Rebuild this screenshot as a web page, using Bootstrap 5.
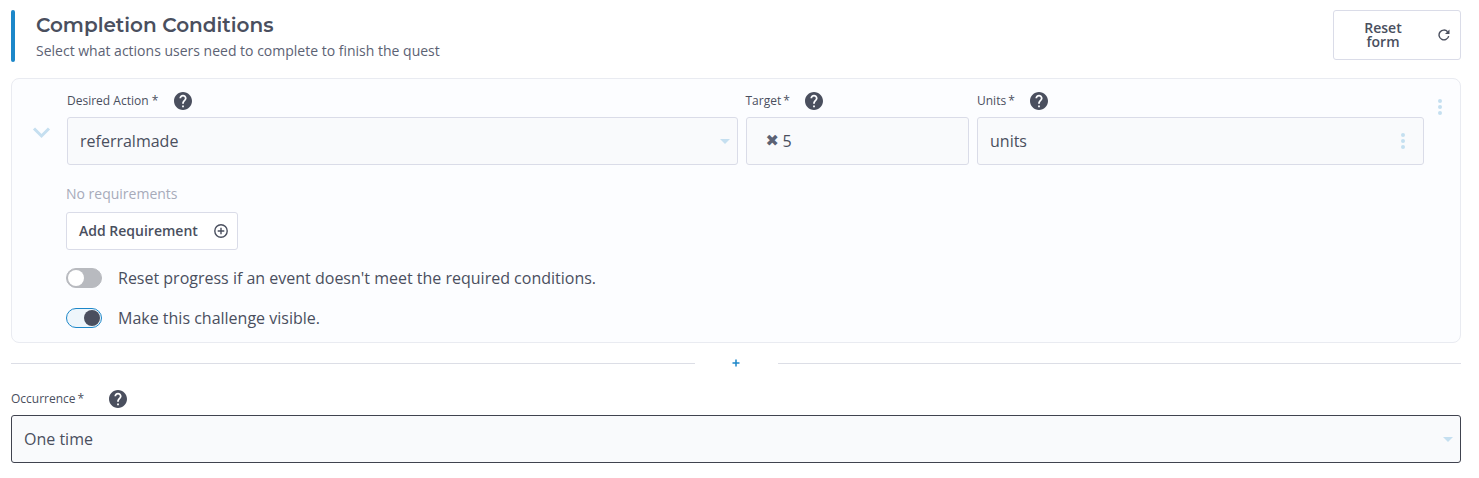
<!DOCTYPE html>
<html lang="en">
<head>
<meta charset="utf-8">
<meta name="viewport" content="width=device-width, initial-scale=1">
<title>Completion Conditions</title>
<link href="https://cdn.jsdelivr.net/npm/bootstrap@5.3.0/dist/css/bootstrap.min.css" rel="stylesheet">
<style>
  :root { --ink: #4a4f5e; --line: #dadce8; --pale: #c5dff0; --accent: #1c87c9; }
  body { font-family: "Open Sans", "Noto Sans", sans-serif; color: var(--ink); font-size: 16px; line-height: 24px; background: #fff; }
  .page-form { padding: 10px 18px 15px 11px; }
  .accent-bar { width: 4px; height: 52px; border-radius: 2px; background: var(--accent); margin-right: 21px; }
  .section-title { font-family: Montserrat, "Open Sans", sans-serif; font-size: 20px; line-height: 30px; font-weight: 600; margin: 0; }
  .section-note { font-size: 14px; line-height: 22px; color: #5c6274; margin: 0; }
  .btn-plain { --bs-btn-color: var(--ink); --bs-btn-bg: #fff; --bs-btn-border-color: var(--line); --bs-btn-hover-color: var(--ink); --bs-btn-hover-bg: #f8fafc; --bs-btn-hover-border-color: var(--line); --bs-btn-border-radius: 3px; font-size: 14px; line-height: 14px; font-weight: 600; }
  .btn-reset { width: 128px; height: 50px; padding: 0 10px; }
  .btn-add { height: 38px; padding: 0 8px 0 12px; gap: 15px; }
  .challenge { border: 1px solid #e9ebf1; border-radius: 8px; background: #fcfdff; margin-top: 16px; padding: 12px 10px 14px 20px; }
  .icon-button { border: 0; padding: 0; background: none; color: var(--pale); line-height: 0; }
  .toggle-col { width: 20px; margin: 34px 15px 0 0; }
  .menu-col { width: 20px; margin: 8px 0 0 6px; }
  .fields { gap: 8px; }
  .w6 { flex: 6 1 0; } .w4 { flex: 4 1 0; } .w2 { flex: 2 1 0; }
  .field-label { display: flex; align-items: center; height: 20px; font-size: 12px; line-height: 18px; margin-bottom: 6px; }
  .req { margin-left: 2px; }
  .help { width: 18px; height: 18px; margin-left: 15px; }
  .help-far { margin-left: 25px; }
  .field-box.form-control, .field-box.form-select { height: 48px; padding: 0 12px; border: 1px solid var(--line); border-radius: 3px; background-color: #f9fafc; color: var(--ink); font-size: 16px; }
  .field-box.form-select { background-image: url("data:image/svg+xml,%3Csvg xmlns='http://www.w3.org/2000/svg' viewBox='0 0 10 5'%3E%3Cpath d='M0 0h10L5 5z' fill='%23c5dff0'/%3E%3C/svg%3E"); background-size: 10px 5px; background-position: right 7px center; }
  .field-box.focused { border-color: #40434f; }
  .field-box.with-mark { padding-left: 36px; }
  .field-mark { position: absolute; left: 20px; top: 0; line-height: 48px; font-family: "DejaVu Sans", sans-serif; font-weight: 700; font-size: 16px; color: #5c6274; }
  .field-menu { position: absolute; right: 13px; top: 16px; }
  .details { padding-left: 34px; }
  .muted-note { font-size: 14px; line-height: 20px; color: #a7abba; margin: 19px 0 8px; }
  .form-switch.slider { display: flex; align-items: center; height: 20px; min-height: 0; margin: 18px 0 0; padding: 0; gap: 16px; }
  .form-switch.slider + .slider { margin-top: 20px; }
  .slider .form-check-input { float: none; margin: 0; width: 36px; height: 20px; border-color: #b8babf; background: #b8babf url("data:image/svg+xml,%3Csvg xmlns='http://www.w3.org/2000/svg' viewBox='0 0 16 16'%3E%3Ccircle cx='8' cy='8' r='8' fill='%23fff'/%3E%3C/svg%3E") no-repeat 1px center / 16px 16px; border-radius: 10px; }
  .slider .form-check-input:checked { border-color: var(--accent); background: #eef6fb url("data:image/svg+xml,%3Csvg xmlns='http://www.w3.org/2000/svg' viewBox='0 0 16 16'%3E%3Ccircle cx='8' cy='8' r='8' fill='%234a4f5e'/%3E%3C/svg%3E") no-repeat 17px center / 16px 16px; }
  .divider { margin-top: 10px; height: 20px; }
  .divider-line { height: 1px; background: #dcdee6; }
  .divider-button { width: 83px; }
  .occurrence { margin-top: 16px; }
</style>
</head>
<body>
<svg class="d-none" aria-hidden="true">
  <symbol id="help" viewBox="2 2 20 20"><path fill="currentColor" d="M12 2C6.480 2 2 6.480 2 12s4.480 10 10 10 10-4.480 10-10S17.520 2 12 2zm1 17h-2v-2h2v2zm2.070-7.750-.9.920C13.450 12.900 13 13.500 13 15h-2v-.5c0-1.100.450-2.100 1.170-2.830l1.240-1.260c.370-.360.590-.860.590-1.410 0-1.100-.9-2-2-2s-2 .9-2 2H8c0-2.210 1.790-4 4-4s4 1.790 4 4c0 .880-.360 1.680-.930 2.250z"/></symbol>
  <symbol id="dots" viewBox="0 0 4 16"><g fill="currentColor"><circle cx="2" cy="2" r="2"/><circle cx="2" cy="8" r="2"/><circle cx="2" cy="14" r="2"/></g></symbol>
</svg>
<form class="page-form">
  <header class="d-flex align-items-start">
    <div class="accent-bar flex-shrink-0"></div>
    <div class="flex-grow-1">
      <h2 class="section-title">Completion Conditions</h2>
      <p class="section-note">Select what actions users need to complete to finish the quest</p>
    </div>
    <button type="button" class="btn btn-plain btn-reset d-flex align-items-center flex-shrink-0">
      <span class="flex-grow-1">Reset<br>form</span>
      <svg class="ms-3" width="12" height="12" viewBox="0 0 12 12" fill="none"><path d="M10.700 7.200A4.900 4.900 0 1 1 9.600 2.700" stroke="currentColor" stroke-width="1.400"/><path d="M11.500.5v4.500H7z" fill="currentColor"/></svg>
    </button>
  </header>

  <section class="challenge">
    <div class="d-flex align-items-start">
      <button type="button" class="icon-button toggle-col" aria-label="Collapse"><svg width="20" height="14" viewBox="0 0 20 14" fill="none"><path d="M2 3.500 9.500 11 17 3.500" stroke="currentColor" stroke-width="3"/></svg></button>
      <div class="fields d-flex flex-grow-1">
        <div class="w6">
          <label class="field-label" for="action">Desired Action *<svg class="help ms-3"><use href="#help"/></svg></label>
          <select id="action" class="form-select field-box"><option>referralmade</option></select>
        </div>
        <div class="w2">
          <label class="field-label" for="target">Target<span class="req">*</span><svg class="help"><use href="#help"/></svg></label>
          <div class="position-relative">
            <span class="field-mark">✖</span>
            <input id="target" type="text" class="form-control field-box with-mark" value="5">
          </div>
        </div>
        <div class="w4">
          <label class="field-label" for="units">Units<span class="req">*</span><svg class="help"><use href="#help"/></svg></label>
          <div class="position-relative">
            <input id="units" type="text" class="form-control field-box" value="units">
            <button type="button" class="icon-button field-menu" aria-label="Unit options"><svg width="16" height="16"><use href="#dots"/></svg></button>
          </div>
        </div>
      </div>
      <button type="button" class="icon-button menu-col" aria-label="Challenge options"><svg width="16" height="16"><use href="#dots"/></svg></button>
    </div>
    <div class="details">
      <p class="muted-note">No requirements</p>
      <button type="button" class="btn btn-plain btn-add d-flex align-items-center">Add Requirement
        <svg width="16" height="16" viewBox="0 0 16 16" fill="none" stroke="currentColor"><circle cx="8" cy="8" r="6.200" stroke-width="1.400"/><path d="M8 4.700v6.600M4.700 8h6.600" stroke-width="1.400"/></svg>
      </button>
      <div class="form-check form-switch slider">
        <input class="form-check-input" type="checkbox" role="switch" id="reset-progress">
        <label for="reset-progress">Reset progress if an event doesn't meet the required conditions.</label>
      </div>
      <div class="form-check form-switch slider">
        <input class="form-check-input" type="checkbox" role="switch" id="visible" checked>
        <label for="visible">Make this challenge visible.</label>
      </div>
    </div>
  </section>

  <div class="divider d-flex align-items-center">
    <div class="divider-line flex-grow-1"></div>
    <button type="button" class="icon-button divider-button" aria-label="Add challenge"><svg width="8" height="8" viewBox="0 0 8 8" fill="none" stroke="#1c87c9" stroke-width="1.500"><path d="M4 .5v7M.5 4h7"/></svg></button>
    <div class="divider-line flex-grow-1"></div>
  </div>

  <div class="occurrence">
    <label class="field-label" for="occurrence">Occurrence<span class="req">*</span><svg class="help help-far"><use href="#help"/></svg></label>
    <select id="occurrence" class="form-select field-box focused"><option>One time</option></select>
  </div>
</form>
<script src="https://cdn.jsdelivr.net/npm/bootstrap@5.3.0/dist/js/bootstrap.bundle.min.js"></script>
</body>
</html>
